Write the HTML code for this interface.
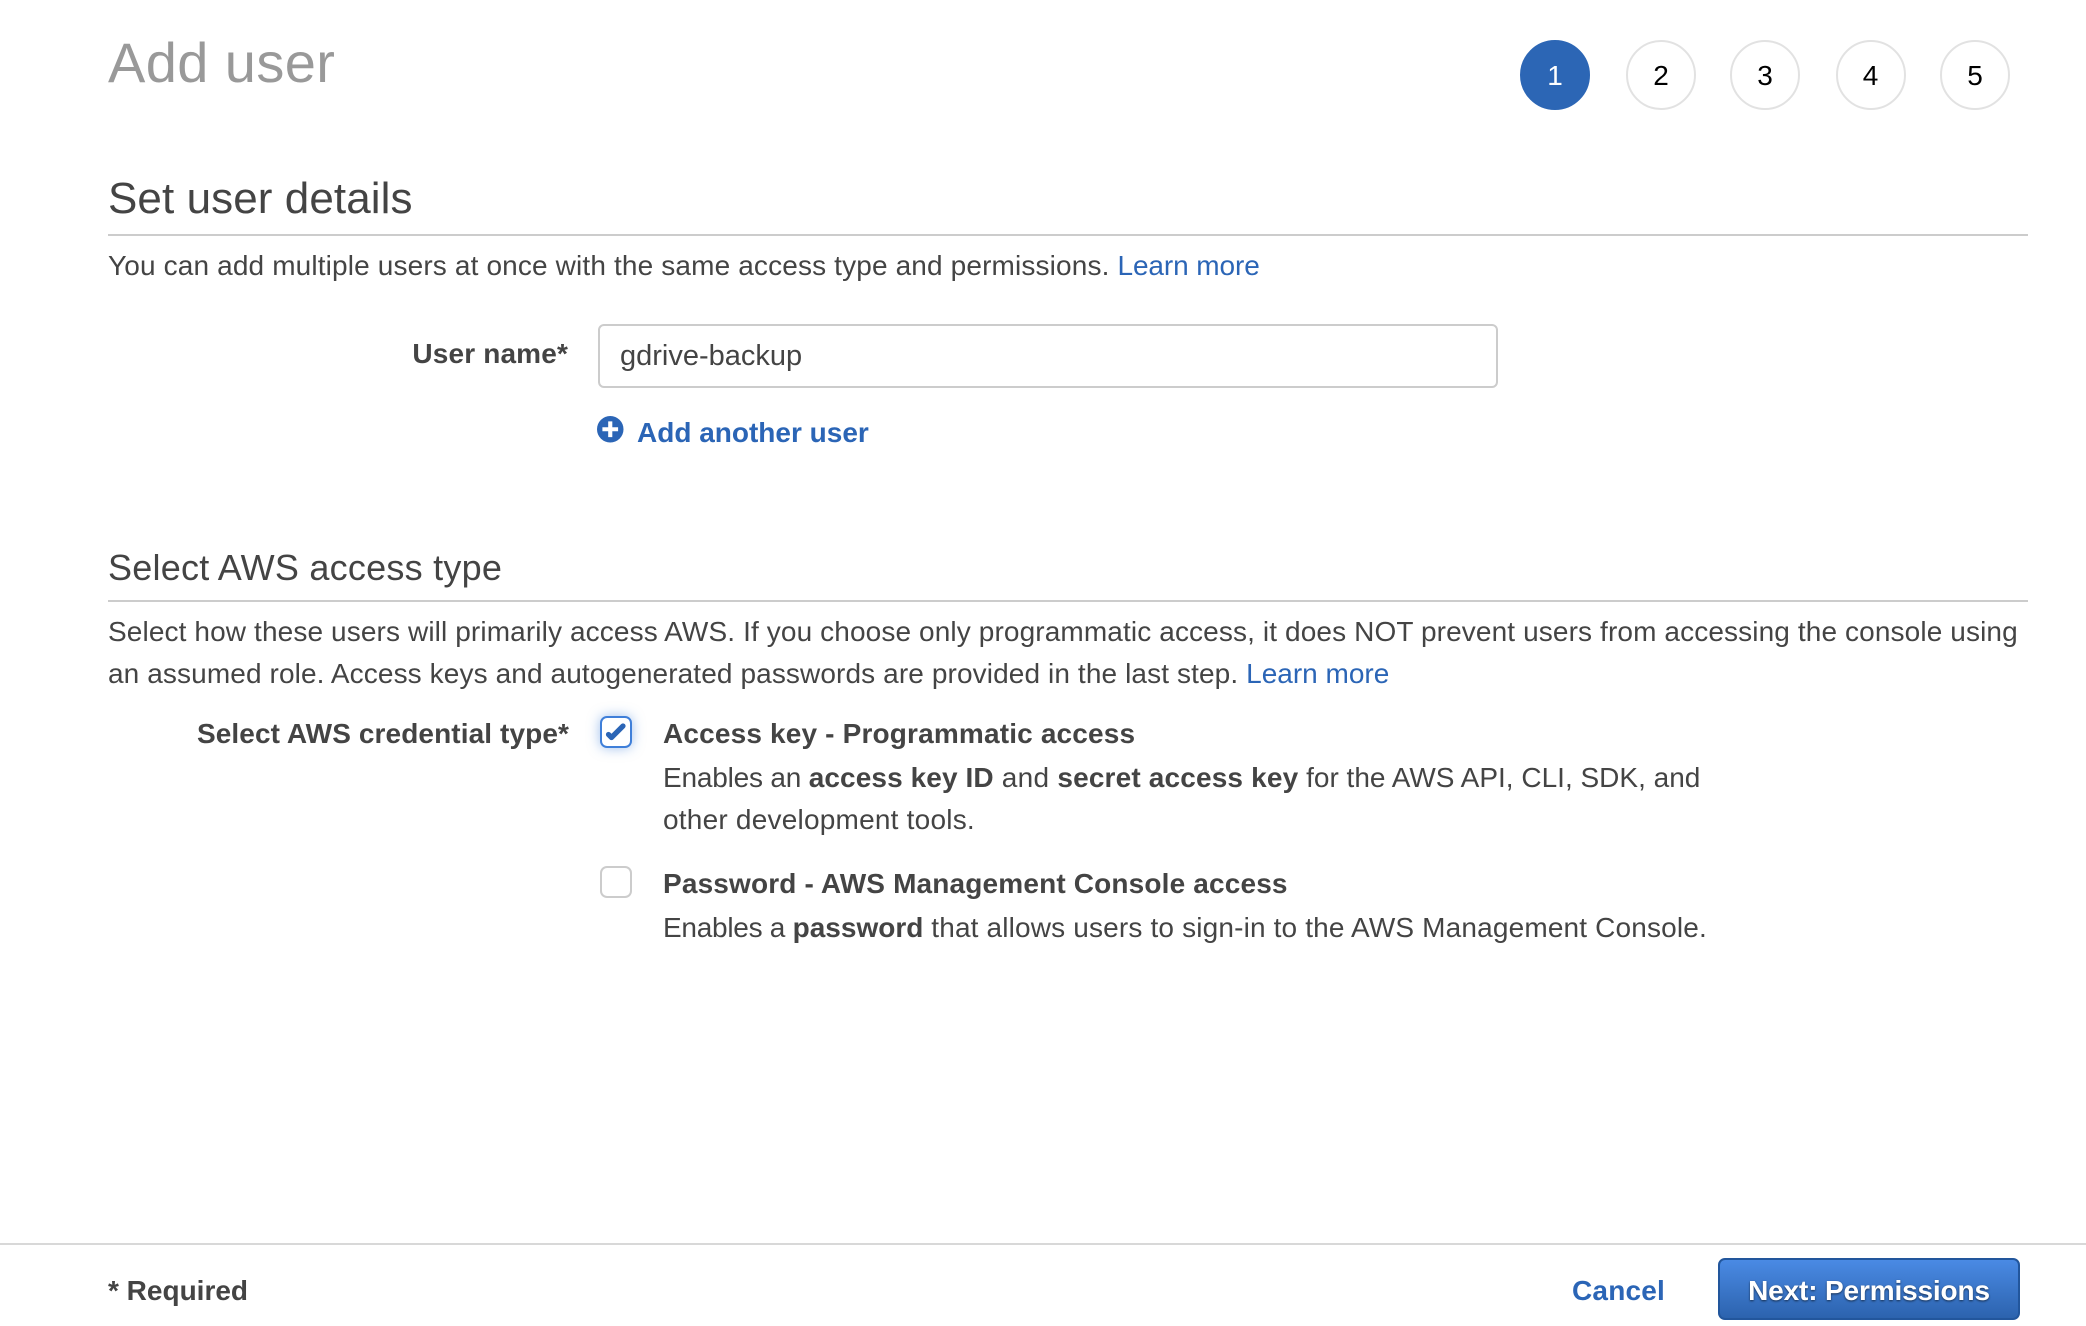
<!DOCTYPE html>
<html lang="en">
<head>
<meta charset="utf-8">
<title>Add user</title>
<style>
html,body{margin:0;padding:0;background:#fff}
body{position:relative;width:2086px;height:1326px;overflow:hidden;font-family:"Liberation Sans",Arial,sans-serif;color:#444;font-size:28px}
.t{position:absolute;white-space:nowrap;line-height:40px;height:40px}
a{color:#2b65b6;text-decoration:none}
b{font-weight:700}
.c{position:absolute;top:40px;width:70px;height:70px;box-sizing:border-box;border:2px solid #e2e2e2;border-radius:50%;text-align:center;line-height:67px;color:#000;font-size:28px;background:#fff}
.c.on{background:#2c66b5;border-color:#2c66b5;color:#fff}
.hr{position:absolute;left:108px;width:1919.500px;height:2px;background:#ccc}
.cb{position:absolute;left:600px;width:32px;height:32px;box-sizing:border-box;border:2px solid #ccc;border-radius:7px;background:#fff}
.cb.on{border-color:#3f7fd9;box-shadow:0 0 12px rgba(63,127,217,.5)}
.cb svg{position:absolute;left:-2px;top:-2px}
</style>
</head>
<body>
<div class="t" style="left:108px;top:31px;font-size:56px;line-height:64px;height:64px;color:#999;letter-spacing:.4px">Add user</div>

<div class="c on" style="left:1520px">1</div>
<div class="c" style="left:1626px">2</div>
<div class="c" style="left:1730px">3</div>
<div class="c" style="left:1835.500px">4</div>
<div class="c" style="left:1940px">5</div>

<div class="t" style="left:108px;top:174px;font-size:44px;line-height:50px;height:50px;letter-spacing:.08px">Set user details</div>
<div class="hr" style="top:234px"></div>
<div class="t" style="left:108px;top:246px;letter-spacing:.145px">You can add multiple users at once with the same access type and permissions. <a style="letter-spacing:-.1px">Learn more</a></div>

<div class="t" style="right:1518px;top:334px;letter-spacing:.15px"><b>User name*</b></div>
<div style="position:absolute;left:598px;top:324px;width:900px;height:64px;box-sizing:border-box;border:2px solid #ccc;border-radius:6px;background:#fff"></div>
<div class="t" style="left:620px;top:336px;font-size:29px">gdrive-backup</div>

<svg style="position:absolute;left:597px;top:416px" width="26.500" height="26.500" viewBox="0 0 27 27"><circle cx="13.500" cy="13.500" r="13.500" fill="#2b65b6"/><path d="M13.500 5.500v16M5.500 13.500h16" stroke="#fff" stroke-width="4.200"/></svg>
<div class="t" style="left:637px;top:413px"><a><b>Add another user</b></a></div>

<div class="t" style="left:108px;top:548px;font-size:36px;letter-spacing:.24px">Select AWS access type</div>
<div class="hr" style="top:600px"></div>
<div class="t" style="left:108px;top:612px;letter-spacing:.118px">Select how these users will primarily access AWS. If you choose only programmatic access, it does NOT prevent users from accessing the console using</div>
<div class="t" style="left:108px;top:654px;letter-spacing:.11px">an assumed role. Access keys and autogenerated passwords are provided in the last step. <a style="letter-spacing:0">Learn more</a></div>

<div class="t" style="right:1517px;top:714px;letter-spacing:.1px"><b>Select AWS credential type*</b></div>

<div class="cb on" style="top:716px"><svg width="32" height="32" viewBox="0 0 32 32"><path d="M8.500 18.500L11.500 21.500L23 10" fill="none" stroke="#2b65b6" stroke-width="5.200" stroke-linecap="round" stroke-linejoin="round"/></svg></div>
<div class="t" style="left:663px;top:714px;letter-spacing:.165px"><b>Access key - Programmatic access</b></div>
<div class="t" style="left:663px;top:758px"><span style="letter-spacing:-.2px">Enables an </span><b style="letter-spacing:.1px">access key ID</b><span style="letter-spacing:.27px"> and </span><b style="letter-spacing:.16px">secret access key</b> for the AWS API, CLI, SDK, and</div>
<div class="t" style="left:663px;top:800px;letter-spacing:.22px">other development tools.</div>

<div class="cb" style="top:866px"></div>
<div class="t" style="left:663px;top:864px;letter-spacing:.16px"><b>Password - AWS Management Console access</b></div>
<div class="t" style="left:663px;top:908px"><span style="letter-spacing:-.27px">Enables a </span><b>password</b><span style="letter-spacing:.16px"> that allows users to sign-in to the AWS Management Console.</span></div>

<div style="position:absolute;left:0;top:1243px;width:2086px;height:2px;background:#d8d8d8"></div>
<div class="t" style="left:108px;top:1271px"><b>* Required</b></div>
<div class="t" style="left:1572px;top:1271px;letter-spacing:.2px"><a style="color:#2b65b6"><b>Cancel</b></a></div>
<div style="position:absolute;left:1718px;top:1258px;width:302px;height:62px;box-sizing:border-box;border:2px solid #22569c;border-radius:7px;background:linear-gradient(#4a8ae4,#2c63ae);color:#fff;text-align:center;font-weight:700;line-height:61px;letter-spacing:-.15px;text-shadow:0 1px 2px rgba(0,0,0,.6)">Next: Permissions</div>
</body>
</html>
